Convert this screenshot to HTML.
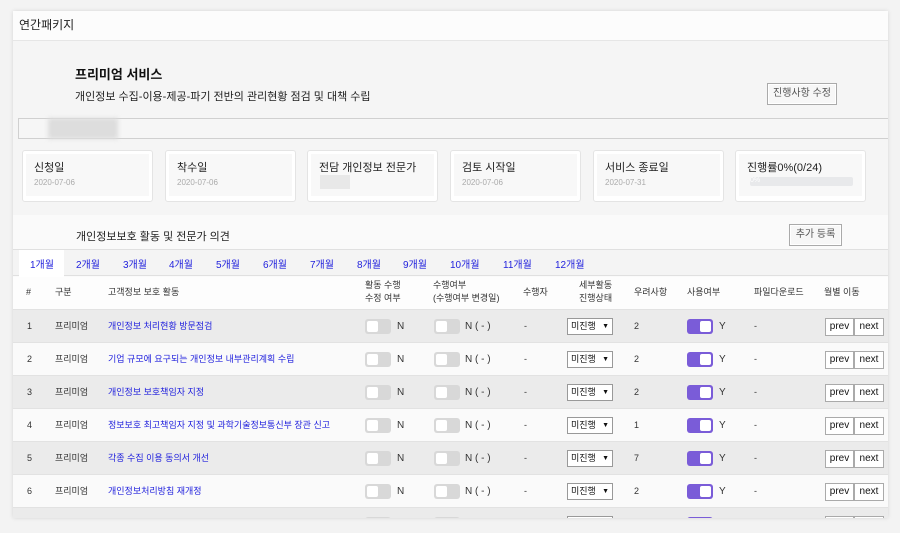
<!DOCTYPE html>
<html><head><meta charset="utf-8"><style>
*{box-sizing:border-box;margin:0;padding:0}
body{width:900px;height:533px;background:#f3f3f3;font-family:"Liberation Sans","Noto Sans CJK KR",sans-serif;color:#333;position:relative;overflow:hidden}
.abs{position:absolute}
.panel{left:13px;top:11px;width:875px;height:507px;background:#f5f5f5;box-shadow:0 0 4px rgba(0,0,0,.12);overflow:hidden}
.hdr{left:0;top:0;width:875px;height:30px;background:#fcfcfc;border-bottom:1px solid #e6e6e6;font-size:12px;padding:5px 0 0 6px;color:#222}
.btn{border:1px solid #aaa;background:#f7f7f7;font-size:10px;color:#555;text-align:center;box-shadow:inset 0 0 0 1px #fff;line-height:20px}
.card{width:131px;height:52px;background:#fff;border:1px solid #e4e4e4;border-radius:3px;top:139px}
.card .in{position:absolute;left:3px;top:3px;right:3px;bottom:5px;background:#f8f8f8}
.card .t{position:absolute;left:11px;top:8px;font-size:11px;color:#222}
.card .d{position:absolute;left:11px;top:27px;font-size:8px;color:#aaa}
.tab{top:245px;font-size:10px;color:#2222dd}
.th{top:268px;font-size:9px;color:#333;line-height:13px}
.row{left:0;width:875px;height:33px;font-size:9px;border-top:1px solid #e2e2e2}
.row span,.row div{position:absolute}
.row span{top:0;line-height:33px}
.tg{width:26px;height:15px;border-radius:3px;background:#d8d8d8;top:9px}
.tg::after{content:"";position:absolute;left:2px;top:2px;width:11px;height:11px;background:#fff;border-radius:2px}
.tp{background:#7a5cd8}
.tp::after{left:13px}
.sel{width:46px;height:17px;background:#fff;border:1px solid #999;top:8px;font-size:9px;padding:0 0 0 3px;line-height:15px;color:#111}
.sel b{position:absolute;right:3px;top:0;font-size:7px}
.pb{top:8px;height:18px;border:1px solid #aaa;background:#fff;font-size:10px;color:#111;text-align:center;line-height:16px}
</style></head><body>
<div class="abs panel">
<div class="abs hdr">연간패키지</div>
<div class="abs" style="left:62px;top:53px;font-size:13px;font-weight:bold;color:#111">프리미엄 서비스</div>
<div class="abs" style="left:62px;top:77px;font-size:11px;color:#222">개인정보 수집-이용-제공-파기 전반의 관리현황 점검 및 대책 수립</div>
<div class="abs btn" style="left:754px;top:72px;width:70px;height:22px">진행사항 수정</div>
<div class="abs" style="left:5px;top:107px;width:875px;height:21px;border:1px solid #d0d0d0;background:#f6f6f6"></div>
<div class="abs" style="left:35px;top:107px;width:70px;height:21px;background:#ddd;filter:blur(2px)"></div>
<div class="abs card" style="left:9px"><div class="in"></div><div class="t">신청일</div><div class="d">2020-07-06</div></div>
<div class="abs card" style="left:152px"><div class="in"></div><div class="t">착수일</div><div class="d">2020-07-06</div></div>
<div class="abs card" style="left:294px"><div class="in"></div><div class="t">전담 개인정보 전문가</div><div class="abs" style="left:12px;top:24px;width:30px;height:14px;background:#e8e8e8"></div></div>
<div class="abs card" style="left:437px"><div class="in"></div><div class="t">검토 시작일</div><div class="d">2020-07-06</div></div>
<div class="abs card" style="left:580px"><div class="in"></div><div class="t">서비스 종료일</div><div class="d">2020-07-31</div></div>
<div class="abs card" style="left:722px"><div class="in"></div><div class="t">진행률0%(0/24)</div><div class="abs" style="left:14px;top:26px;width:103px;height:9px;background:#e8e9eb;border-radius:2px;font-size:7px;color:#fff">0%</div></div>
<div class="abs" style="left:0;top:204px;width:875px;height:303px;background:#fafafa"></div>
<div class="abs" style="left:63px;top:217px;font-size:11px;color:#222">개인정보보호 활동 및 전문가 의견</div>
<div class="abs btn" style="left:776px;top:213px;width:53px;height:22px">추가 등록</div>
<div class="abs" style="left:0;top:238px;width:875px;height:27px;background:#f4f4f4;border-top:1px solid #e0e0e0;border-bottom:1px solid #e0e0e0"></div>
<div class="abs" style="left:6px;top:239px;width:45px;height:27px;background:#fff"></div>
<div class="abs tab" style="left:17px">1개월</div><div class="abs tab" style="left:63px">2개월</div><div class="abs tab" style="left:110px">3개월</div><div class="abs tab" style="left:156px">4개월</div><div class="abs tab" style="left:203px">5개월</div><div class="abs tab" style="left:250px">6개월</div><div class="abs tab" style="left:297px">7개월</div><div class="abs tab" style="left:344px">8개월</div><div class="abs tab" style="left:390px">9개월</div><div class="abs tab" style="left:437px">10개월</div><div class="abs tab" style="left:490px">11개월</div><div class="abs tab" style="left:542px">12개월</div>
<div class="abs" style="left:0;top:266px;width:875px;height:32px;background:#fdfdfd"></div>
<div class="abs th" style="left:13px;top:275px">#</div>
<div class="abs th" style="left:42px;top:275px">구분</div>
<div class="abs th" style="left:95px;top:275px">고객정보 보호 활동</div>
<div class="abs th" style="left:352px">활동 수행<br>수정 여부</div>
<div class="abs th" style="left:420px">수행여부<br>(수행여부 변경일)</div>
<div class="abs th" style="left:510px;top:275px">수행자</div>
<div class="abs th" style="left:566px">세부활동<br>진행상태</div>
<div class="abs th" style="left:621px;top:275px">우려사항</div>
<div class="abs th" style="left:674px;top:275px">사용여부</div>
<div class="abs th" style="left:741px;top:275px">파일다운로드</div>
<div class="abs th" style="left:811px;top:275px">월별 이동</div>
<div id="rows"></div>
<script>
var d=[["1","개인정보 처리현황 방문점검","2"],["2","기업 규모에 요구되는 개인정보 내부관리계획 수립","2"],["3","개인정보 보호책임자 지정","2"],["4","정보보호 최고책임자 지정 및 과학기술정보통신부 장관 신고","1"],["5","각종 수집 이용 동의서 개선","7"],["6","개인정보처리방침 재개정","2"],["",""," "]];
var h="";d.forEach(function(r,i){var top=298+i*33;var bg=i%2==0?"#ebebeb":"#fafafa";
h+='<div class="abs row" style="top:'+top+'px;background:'+bg+'">';
if(r[0]){h+='<span style="left:14px">'+r[0]+'</span><span style="left:42px">프리미엄</span><span style="left:95px;color:#2222dd">'+r[1]+'</span>';}
h+='<div class="tg" style="left:352px"></div>';
if(r[0])h+='<span style="left:384px;font-size:10px">N</span>';
h+='<div class="tg" style="left:421px"></div>';
if(r[0])h+='<span style="left:452px;font-size:10px">N ( - )</span><span style="left:511px">-</span>';
h+='<div class="sel" style="left:554px">'+(r[0]?'미진행<b>▼</b>':'')+'</div>';
if(r[0])h+='<span style="left:621px">'+r[2]+'</span>';
h+='<div class="tg tp" style="left:674px"></div>';
if(r[0])h+='<span style="left:706px;font-size:10px">Y</span><span style="left:741px">-</span>';
h+='<div class="pb" style="left:812px;width:29px">'+(r[0]?'prev':'')+'</div><div class="pb" style="left:841px;width:30px">'+(r[0]?'next':'')+'</div>';
h+='</div>';});
document.getElementById("rows").innerHTML=h;
</script>
</div>
</body></html>
